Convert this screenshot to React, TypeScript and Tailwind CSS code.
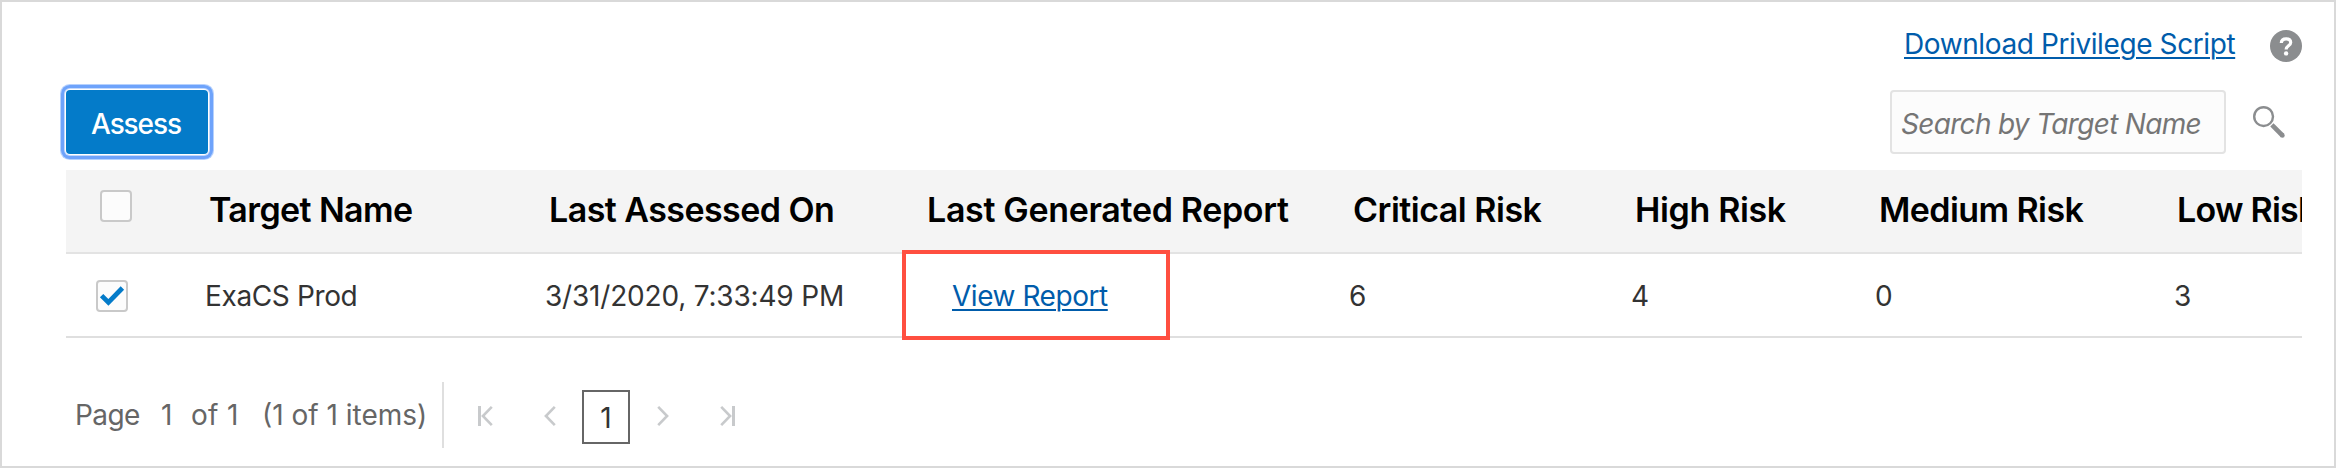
function Help() {
  return (
    <svg className="h-8 w-8" viewBox="0 0 32 32" fill="none">
      <circle cx="16" cy="16" r="16" fill="#8b8d8f" />
      <path d="M11.3 13C11.4 10.2 13.3 8.8 16.1 8.8c2.9 0 4.6 1.4 4.6 3.7 0 3.4-4.6 3.2-4.6 7" stroke="#fff" strokeWidth="3.2" />
      <circle cx="16.1" cy="23.4" r="2.2" fill="#fff" />
    </svg>
  );
}

function Search() {
  return (
    <svg className="h-8 w-8" viewBox="0 0 32 32" fill="none" stroke="#8b8d8f">
      <circle cx="10.6" cy="10.6" r="9.4" strokeWidth="2.4" />
      <path d="M18.9 18.9 29.5 29.5" strokeWidth="4.6" />
      <circle cx="29.4" cy="29.4" r="2.3" fill="#8b8d8f" stroke="none" />
    </svg>
  );
}

function Chevron({ d, className }: { d: string; className: string }) {
  return (
    <svg className={className} viewBox="0 0 12 20" fill="none" stroke="#c8cacc" strokeWidth="2.6">
      <path d={d} />
    </svg>
  );
}

const LEFT = "M10.8 0.9 1.9 10l8.9 9.1";
const RIGHT = "M1.2 0.9 10.1 10l-8.9 9.1";

export default function App() {
  return (
    <div className="flex h-[468px] w-[2336px] flex-col overflow-hidden border-2 border-[#d9d9d9] bg-white pr-8 pl-16 font-['Inter','Liberation_Sans',sans-serif] text-[28px] whitespace-nowrap text-[#333]">
      <div className="flex h-[88px] items-start justify-end pt-7">
        <a className="mr-[34px] h-8 w-[332px] leading-[28px] tracking-[-0.4px] text-[#005cab] underline decoration-2 underline-offset-[3px]">Download Privilege Script</a>
        <Help />
      </div>
      <div className="flex h-20 items-start justify-between">
        <button className="h-16 w-[142px] rounded-[4px] bg-[#047bc9] pl-[25px] pt-[3px] text-left font-medium tracking-[-1.1px] text-white shadow-[0_0_0_1px_#fff,0_0_0_2px_#c3d9fd,0_0_0_5px_#6ea3fb,0_0_0_6px_#b6d1fd]">Assess</button>
        <div className="flex items-start pr-[17px]">
          <div className="mr-[27px] h-16 w-[336px] rounded-[4px] border-2 border-[#e3e3e3] bg-[#fcfcfc] pl-[9px] leading-[65px] tracking-[-0.69px] text-[#757575] italic">Search by Target Name</div>
          <div className="pt-4">
            <Search />
          </div>
        </div>
      </div>
      <div className="overflow-x-clip">
        <div className="flex h-[84px] border-b-2 border-[#e3e3e3] bg-[#f4f4f4] text-[34px] leading-[79px] font-semibold text-black">
          <div className="w-[143px] shrink-0 pt-5 pl-[34px]">
            <div className="h-8 w-8 rounded-[4px] border-2 border-[#c9c9c9] bg-[#fcfcfc]" />
          </div>
          <div className="w-[340px] shrink-0 tracking-[-0.61px]">Target Name</div>
          <div className="w-[378px] shrink-0 tracking-[-0.55px]">Last Assessed On</div>
          <div className="w-[426px] shrink-0 tracking-[-0.33px]">Last Generated Report</div>
          <div className="w-[282px] shrink-0 tracking-[-0.5px]">Critical Risk</div>
          <div className="w-[244px] shrink-0 tracking-[-0.35px]">High Risk</div>
          <div className="w-[298px] shrink-0 tracking-[-0.58px]">Medium Risk</div>
          <div className="shrink-0 tracking-[-0.75px]">Low Risk</div>
        </div>
        <div className="flex h-[84px] border-b-2 border-[#dfdfdf] leading-[84px]">
          <div className="w-[139px] shrink-0 pt-[26px] pl-[30px]">
            <div className="flex h-8 w-8 items-center justify-center rounded-[4px] border-2 border-[#c9c9c9] bg-[#fcfcfc]">
              <svg className="h-7 w-7" viewBox="0 0 28 28" fill="none" stroke="#047bc9" strokeWidth="4.8">
                <path d="M3.6 13.6 10.4 20.4 24.4 6" />
              </svg>
            </div>
          </div>
          <div className="w-[340px] shrink-0 tracking-[-0.37px]">ExaCS Prod</div>
          <div className="w-[357px] shrink-0 tracking-[-0.19px]">3/31/2020, 7:33:49 PM</div>
          <div className="relative -mt-1 h-[90px] w-[268px] shrink-0 border-4 border-[#ff4f40] pl-[46px]">
            <a className="leading-[84px] tracking-[-0.45px] text-[#005cab] underline decoration-2 underline-offset-[3px]">View Report</a>
          </div>
          <div className="ml-[179px] w-[282px] shrink-0">6</div>
          <div className="w-[244px] shrink-0">4</div>
          <div className="w-[299px] shrink-0">0</div>
          <div>3</div>
        </div>
      </div>
      <div className="mt-11 flex h-[66px] text-[#666]">
        <span className="w-[95px] pl-[9px] leading-[67px] tracking-[-0.59px]">Page</span>
        <span className="w-[30px] leading-[67px]">1</span>
        <span className="w-[71px] leading-[67px] tracking-[0.32px]">of 1</span>
        <span className="w-[180px] leading-[67px]">(1 of 1 items)</span>
        <div className="w-[2px] bg-[#dfdfdf]" />
        <div className="flex items-start">
          <div className="mt-6 ml-[34px] flex h-5">
            <div className="w-[3px] bg-[#c8cacc]" />
            <Chevron className="h-5 w-3" d={LEFT} />
          </div>
          <Chevron className="mt-6 ml-[51px] h-5 w-3" d={LEFT} />
          <div className="mt-2 ml-[26px] flex h-[54px] w-12 items-center justify-center border-2 border-[#666] pt-px text-[#333]">1</div>
          <Chevron className="mt-6 ml-[27px] h-5 w-3" d={RIGHT} />
          <div className="mt-6 ml-[51px] flex h-5">
            <Chevron className="h-5 w-3" d={RIGHT} />
            <div className="w-[3px] bg-[#c8cacc]" />
          </div>
        </div>
      </div>
    </div>
  );
}
